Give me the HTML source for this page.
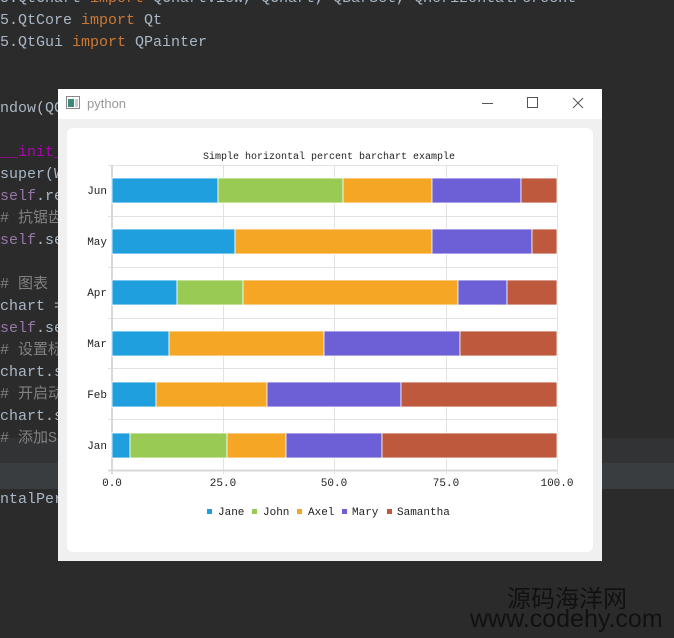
<!DOCTYPE html>
<html><head><meta charset="utf-8"><style>
html,body{margin:0;padding:0;width:674px;height:638px;overflow:hidden;background:#2b2b2b;position:relative;font-family:"Liberation Mono","Noto Sans CJK SC",monospace}
.code{position:absolute;left:0;top:0;width:674px;height:638px;overflow:hidden}
.c{position:absolute;left:0;font-size:15px;color:#a9b7c6;white-space:pre;line-height:22px}
.k{color:#cc7832}.m{color:#9876aa}.p{color:#b200b2}.g{color:#808080}
.hl1{position:absolute;left:0;top:438px;width:674px;height:25px;background:#313335}
.hl2{position:absolute;left:0;top:463px;width:674px;height:26px;background:#3a3d40}
.win{position:absolute;left:58px;top:89px;width:544px;height:472px;background:#f0f0f0}
.tb{position:absolute;left:0;top:0;width:544px;height:30px;background:#fff}
.panel{position:absolute;left:9px;top:39px;width:526px;height:424px;background:#fff;border-radius:6px}
.wm1{position:absolute;left:507px;top:580px;font-family:"Noto Sans CJK SC",sans-serif;font-size:24px;color:#111;line-height:34px}
.wm2{position:absolute;left:470px;top:603px;font-family:"Liberation Sans",sans-serif;font-size:25px;color:#111;line-height:32px;white-space:nowrap}
</style></head><body>
<div class="code">
<div class="hl1"></div><div class="hl2"></div>
<div class="c" style="top:-12px">5.QtChart <span class="k">import</span> QChartView, QChart, QBarSet, QHorizontalPercent</div>
<div class="c" style="top:10px">5.QtCore <span class="k">import</span> Qt</div>
<div class="c" style="top:32px">5.QtGui <span class="k">import</span> QPainter</div>
<div class="c" style="top:98px">ndow(QCh</div>
<div class="c p" style="top:142px">__init__</div>
<div class="c" style="top:164px">super(Wi</div>
<div class="c" style="top:186px"><span class="m">self</span>.res</div>
<div class="c g" style="top:208px"># 抗锯齿</div>
<div class="c" style="top:230px"><span class="m">self</span>.set</div>
<div class="c g" style="top:274px"># 图表</div>
<div class="c" style="top:296px">chart =</div>
<div class="c" style="top:318px"><span class="m">self</span>.set</div>
<div class="c g" style="top:340px"># 设置标题</div>
<div class="c" style="top:362px">chart.se</div>
<div class="c g" style="top:384px"># 开启动画</div>
<div class="c" style="top:406px">chart.se</div>
<div class="c g" style="top:428px"># 添加Ser</div>
<div class="c" style="top:489px">ntalPerc</div>
</div>
<div class="win">
<div class="tb">
<svg width="544" height="30" style="position:absolute;left:0;top:0">
<rect x="8.5" y="7.5" width="13" height="12" fill="#fff" stroke="#888"/><rect x="10" y="10" width="6" height="8" fill="#3a8a7a"/><rect x="17" y="10" width="3" height="8" fill="#ccc"/>
<text x="29" y="19" font-family="Liberation Sans,sans-serif" font-size="13" fill="#999">python</text>
<line x1="424" y1="14.5" x2="435" y2="14.5" stroke="#555"/>
<rect x="469.5" y="8.5" width="10" height="10" fill="none" stroke="#555"/>
<path d="M515 9 L525 19 M525 9 L515 19" stroke="#555"/>
</svg></div>
<div class="panel"></div>
</div>
<svg width="674" height="638" style="position:absolute;left:0;top:0" font-family="Liberation Mono,monospace" font-size="10">
<text x="329" y="159" text-anchor="middle" fill="#222">Simple horizontal percent barchart example</text>
<g stroke="#e2e2e2" stroke-width="1">
<line x1="223.5" y1="165" x2="223.5" y2="474"/><line x1="334.5" y1="165" x2="334.5" y2="474"/><line x1="446.5" y1="165" x2="446.5" y2="474"/><line x1="557.5" y1="165" x2="557.5" y2="474"/>
<line x1="108" y1="165.5" x2="557" y2="165.5"/><line x1="108" y1="216.5" x2="557" y2="216.5"/><line x1="108" y1="267.5" x2="557" y2="267.5"/><line x1="108" y1="318.5" x2="557" y2="318.5"/><line x1="108" y1="368.5" x2="557" y2="368.5"/><line x1="108" y1="419.5" x2="557" y2="419.5"/>
</g>
<line x1="108" y1="470.5" x2="557" y2="470.5" stroke="#d8d8d8" stroke-width="2"/>
<line x1="112" y1="165" x2="112" y2="474" stroke="#d8d8d8" stroke-width="2"/>
<g stroke="#fff" stroke-width="0.8">
<rect x="112" y="178" width="106" height="25" fill="#209fdf"/><rect x="218" y="178" width="125" height="25" fill="#99ca53"/><rect x="343" y="178" width="89" height="25" fill="#f6a625"/><rect x="432" y="178" width="89" height="25" fill="#6d5fd5"/><rect x="521" y="178" width="36" height="25" fill="#bf593e"/>
<rect x="112" y="229" width="123" height="25" fill="#209fdf"/><rect x="235" y="229" width="197" height="25" fill="#f6a625"/><rect x="432" y="229" width="100" height="25" fill="#6d5fd5"/><rect x="532" y="229" width="25" height="25" fill="#bf593e"/>
<rect x="112" y="280" width="65" height="25" fill="#209fdf"/><rect x="177" y="280" width="66" height="25" fill="#99ca53"/><rect x="243" y="280" width="215" height="25" fill="#f6a625"/><rect x="458" y="280" width="49" height="25" fill="#6d5fd5"/><rect x="507" y="280" width="50" height="25" fill="#bf593e"/>
<rect x="112" y="331" width="57" height="25" fill="#209fdf"/><rect x="169" y="331" width="155" height="25" fill="#f6a625"/><rect x="324" y="331" width="136" height="25" fill="#6d5fd5"/><rect x="460" y="331" width="97" height="25" fill="#bf593e"/>
<rect x="112" y="382" width="44" height="25" fill="#209fdf"/><rect x="156" y="382" width="111" height="25" fill="#f6a625"/><rect x="267" y="382" width="134" height="25" fill="#6d5fd5"/><rect x="401" y="382" width="156" height="25" fill="#bf593e"/>
<rect x="112" y="433" width="18" height="25" fill="#209fdf"/><rect x="130" y="433" width="97" height="25" fill="#99ca53"/><rect x="227" y="433" width="59" height="25" fill="#f6a625"/><rect x="286" y="433" width="96" height="25" fill="#6d5fd5"/><rect x="382" y="433" width="175" height="25" fill="#bf593e"/>
</g>
<g fill="#222" text-anchor="end" font-size="11">
<text x="107" y="194">Jun</text><text x="107" y="245">May</text><text x="107" y="296">Apr</text><text x="107" y="347">Mar</text><text x="107" y="398">Feb</text><text x="107" y="449">Jan</text>
</g>
<g fill="#222" text-anchor="middle" font-size="11">
<text x="112" y="486">0.0</text><text x="223" y="486">25.0</text><text x="334" y="486">50.0</text><text x="446" y="486">75.0</text><text x="557" y="486">100.0</text>
</g>
<g fill="#222" font-size="11">
<rect x="207" y="509" width="5" height="5" fill="#209fdf"/><text x="218" y="515">Jane</text>
<rect x="252" y="509" width="5" height="5" fill="#99ca53"/><text x="263" y="515">John</text>
<rect x="297" y="509" width="5" height="5" fill="#f6a625"/><text x="308" y="515">Axel</text>
<rect x="342" y="509" width="5" height="5" fill="#6d5fd5"/><text x="352" y="515">Mary</text>
<rect x="387" y="509" width="5" height="5" fill="#bf593e"/><text x="397" y="515">Samantha</text>
</g>
</svg>
<div class="wm1">源码海洋网</div>
<div class="wm2">www.codehy.com</div>
</body></html>
